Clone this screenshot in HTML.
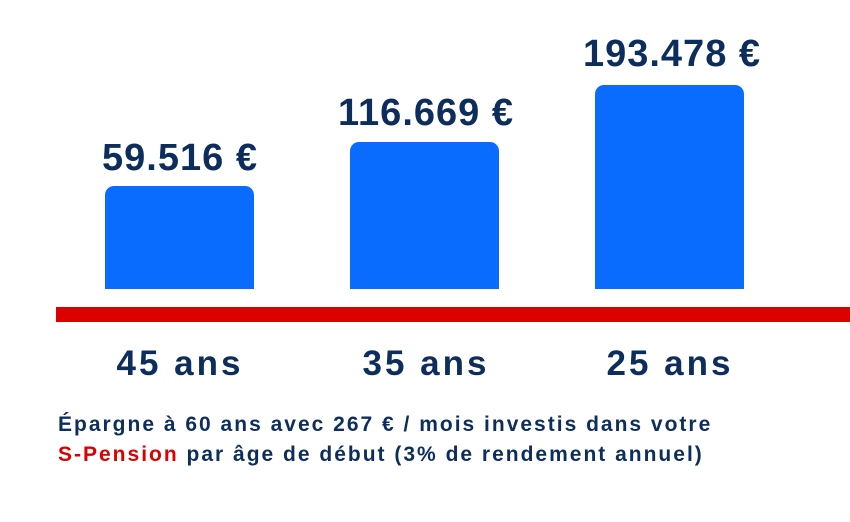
<!DOCTYPE html>
<html><head><meta charset="utf-8"><style>
html,body{margin:0;padding:0;background:#fff;width:850px;height:522px;overflow:hidden;position:relative;font-family:"Liberation Sans",sans-serif;font-weight:bold;color:#0d2e5c}
.bar{position:absolute;background:#0a6cff;border-radius:9px 9px 0 0;width:149px}
.v{position:absolute;font-size:38px;letter-spacing:1px;white-space:nowrap;text-align:center;width:260px;line-height:1}
.a{position:absolute;font-size:35px;letter-spacing:3px;text-align:center;width:260px;line-height:1}
.cap{position:absolute;left:58px;font-size:21px;letter-spacing:2px;white-space:nowrap;line-height:1}
</style></head><body>
<div class="bar" style="left:105px;top:186px;height:103px"></div>
<div class="bar" style="left:350px;top:142px;height:147px"></div>
<div class="bar" style="left:595px;top:85px;height:204px"></div>
<div class="v" style="left:50px;top:139px">59.516 €</div>
<div class="v" style="left:296px;top:94px">116.669 €</div>
<div class="v" style="left:542px;top:35px">193.478 €</div>
<div style="position:absolute;left:56px;top:307px;width:794px;height:15px;background:#dd0000"></div>
<div class="a" style="left:50px;top:346px">45 ans</div>
<div class="a" style="left:296px;top:346px">35 ans</div>
<div class="a" style="left:540px;top:346px">25 ans</div>
<div class="cap" style="top:414px">Épargne à 60 ans avec 267 € / mois investis dans votre</div>
<div class="cap" style="top:444px"><span style="color:#dd0000">S-Pension</span> par âge de début (3% de rendement annuel)</div>
</body></html>
